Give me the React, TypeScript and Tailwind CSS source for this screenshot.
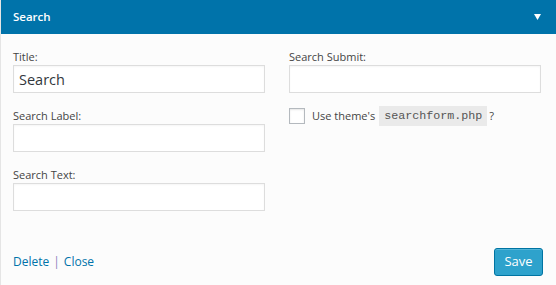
import React from 'react'

const Field = ({ label, value }: { label: string; value?: string }) => (
  <div className="flex flex-col">
    <label className="h-[16px] text-[11px] leading-[16px] text-[#444]">{label}</label>
    <input
      readOnly
      value={value ?? ''}
      className="h-[28px] w-full border border-[#ddd] bg-white px-[5px] text-[14.5px] text-[#32373c] outline-none shadow-[inset_0_1px_2px_rgba(0,0,0,0.04)]"
    />
  </div>
)

export default function App() {
  return (
    <div className="h-[285px] w-[556px] border-l border-[#e5e5e5] bg-[#fcfcfc] font-['Open_Sans',sans-serif]">
      <div className="flex h-[34px] items-center justify-between bg-[#0073aa] pl-[12px] pr-[15px]">
        <span className="text-[11.5px] font-semibold text-white">Search</span>
        <svg width="7" height="6" viewBox="0 0 7 6">
          <path d="M0 0 H7 L3.5 6 Z" fill="#fff" />
        </svg>
      </div>

      <div className="flex flex-col pt-[15px] pl-[12px]">
        <div className="grid grid-cols-2 gap-x-[24px] pr-[15px]">
          <div className="flex flex-col gap-[15px]">
            <Field label="Title:" value="Search" />
            <Field label="Search Label:" />
            <Field label="Search Text:" />
          </div>
          <div className="flex flex-col">
            <Field label="Search Submit:" />
            <div className="mt-[13px] flex items-center">
              <span className="h-[16px] w-[16px] border border-[#b4b9be] bg-white shadow-[inset_0_1px_2px_rgba(0,0,0,0.1)]" />
              <span className="ml-[7px] text-[11px] text-[#444]">Use theme's</span>
              <code className="ml-[4px] bg-[#eaeaea] px-[5px] font-['Liberation_Mono',monospace] text-[11.7px] leading-[20px] text-[#555]">
                searchform.php
              </code>
              <span className="ml-[2px] text-[11px] text-[#444]">?</span>
            </div>
          </div>
        </div>

        <div className="mt-[37px] flex items-center justify-between pr-[13px]">
          <div className="text-[12px] text-[#0073aa]">
            <span>Delete</span>
            <span className="mx-[4px] text-[#8c7fc0]">|</span>
            <span>Close</span>
          </div>
          <button className="h-[28px] w-[49px] rounded-[3px] border border-[#0074a2] bg-[#2ea2cc] text-[13px] text-white shadow-[inset_0_1px_0_rgba(120,200,230,0.5)]">
            Save
          </button>
        </div>
      </div>
    </div>
  )
}
